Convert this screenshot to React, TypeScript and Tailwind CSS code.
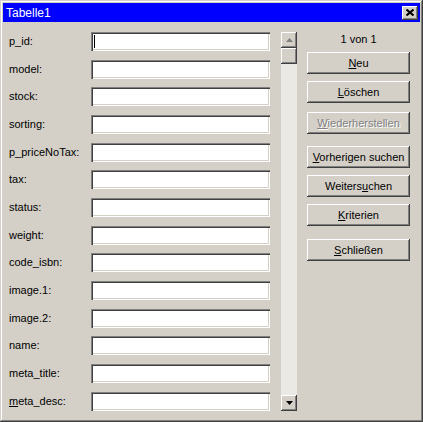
import React from 'react'

const FONT = { fontFamily: '"Liberation Sans", Arial, sans-serif' }

const FIELDS: { label: React.ReactNode; h: string }[] = [
  { label: 'p_id:', h: 'h-[28px]' },
  { label: 'model:', h: 'h-[27px]' },
  { label: 'stock:', h: 'h-[28px]' },
  { label: 'sorting:', h: 'h-[28px]' },
  { label: 'p_priceNoTax:', h: 'h-[27px]' },
  { label: 'tax:', h: 'h-[28px]' },
  { label: 'status:', h: 'h-[28px]' },
  { label: 'weight:', h: 'h-[27px]' },
  { label: 'code_isbn:', h: 'h-[28px]' },
  { label: 'image.1:', h: 'h-[28px]' },
  { label: 'image.2:', h: 'h-[27px]' },
  { label: 'name:', h: 'h-[28px]' },
  { label: 'meta_title:', h: 'h-[28px]' },
  { label: <><u>m</u>eta_desc:</>, h: 'h-[19px]' },
]

const raised =
  'shadow-[inset_-1px_-1px_#404040,inset_1px_1px_#ffffff,inset_-2px_-2px_#808080,inset_2px_2px_#d4d0c8]'
const sunken =
  'shadow-[inset_1px_1px_#808080,inset_2px_2px_#404040,inset_-1px_-1px_#ffffff,inset_-2px_-2px_#d4d0c8]'

function WinButton({ children, disabled, className }: { children: React.ReactNode; disabled?: boolean; className?: string }) {
  return (
    <div
      className={`h-[22px] w-[103px] bg-[#d4d0c8] flex items-center justify-center text-[11px] leading-none ${raised} ${
        disabled ? 'text-[#808080] [text-shadow:1px_1px_#ffffff]' : 'text-black'
      } ${className ?? ''}`}
    >
      {children}
    </div>
  )
}

function ScrollArrow({ up }: { up?: boolean }) {
  return (
    <div className={`w-[16px] h-[16px] bg-[#d4d0c8] flex items-center justify-center ${raised}`}>
      <svg width="7" height="4" viewBox="0 0 7 4">
        {up ? <path d="M3.5 0 L7 4 L0 4 Z" fill="#808080" /> : <path d="M0 0 L7 0 L3.5 4 Z" fill="#000" />}
      </svg>
    </div>
  )
}

export default function App() {
  return (
    <div
      style={FONT}
      className="w-[423px] h-[422px] bg-[#d4d0c8] p-[3px] flex flex-col shadow-[inset_-1px_-1px_#404040,inset_1px_1px_#d4d0c8,inset_-2px_-2px_#808080,inset_2px_2px_#ffffff]"
    >
      {/* title bar */}
      <div className="h-[19px] bg-[#0000ff] flex items-center justify-between pl-[3px] pr-[2px]">
        <span className="text-white text-[12px] leading-none">Tabelle1</span>
        <div className={`w-[16px] h-[14px] bg-[#d4d0c8] flex items-center justify-center ${raised}`}>
          <svg width="8" height="7" viewBox="0 0 8 7">
            <path d="M0.5 0.5 L7.5 6.5 M7.5 0.5 L0.5 6.5" stroke="#000" strokeWidth="2" />
          </svg>
        </div>
      </div>

      {/* body */}
      <div className="flex pt-[10px] pl-[6px]">
        <div className="flex flex-col">
          {FIELDS.map((f, i) => (
            <div key={i} className={`${f.h} flex items-start`}>
              <div className="w-[82px] h-[19px] flex items-center text-[11px] text-black">{f.label}</div>
              <div className={`w-[179px] h-[19px] bg-white flex items-center ${sunken}`}>
                {i === 0 && <span className="ml-[3px] w-px h-[13px] bg-black" />}
              </div>
            </div>
          ))}
        </div>

        {/* scrollbar */}
        <div className="ml-[11px] w-[16px] h-[379px] flex flex-col bg-[#ebe9e4]">
          <ScrollArrow up />
          <div className={`w-[16px] h-[16px] bg-[#d4d0c8] ${raised}`} />
          <div className="flex-1" />
          <ScrollArrow />
        </div>

        {/* right column */}
        <div className="ml-[10px] flex flex-col">
          <div className="h-[20px] text-center text-[11px] leading-[14px] text-black">1 von 1</div>
          <WinButton><span><u>N</u>eu</span></WinButton>
          <WinButton className="mt-[7px]"><span><u>L</u>öschen</span></WinButton>
          <WinButton disabled className="mt-[9px]"><span><u>W</u>iederherstellen</span></WinButton>
          <WinButton className="mt-[12px]"><span><u>V</u>orherigen suchen</span></WinButton>
          <WinButton className="mt-[7px]"><span>Weiters<u>u</u>chen</span></WinButton>
          <WinButton className="mt-[7px]"><span><u>K</u>riterien</span></WinButton>
          <WinButton className="mt-[13px]"><span><u>S</u>chließen</span></WinButton>
        </div>
      </div>
    </div>
  )
}
